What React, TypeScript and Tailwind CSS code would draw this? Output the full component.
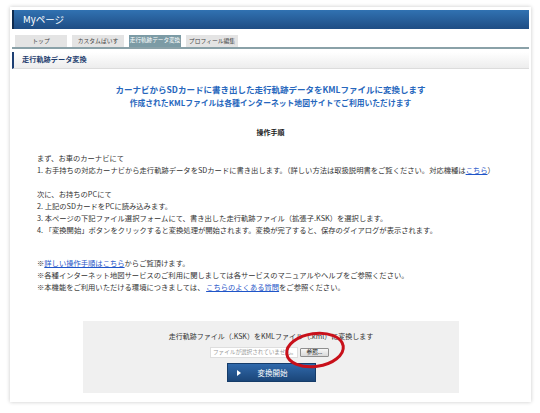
export default function App() {
  const tabs = [
    { label: "トップ", active: false },
    { label: "カスタムぱいす", active: false },
    { label: "走行軌跡データ変換", active: true },
    { label: "プロフィール編集", active: false },
  ];

  return (
    <div className="w-[540px] h-[413px] bg-white pt-[7px] pl-[10px] font-['Noto_Sans_CJK_JP','Noto_Sans',sans-serif] text-[#333]">
      <div className="w-[521px] h-[395px] bg-white shadow-[0_0_4px_rgba(0,0,0,0.22)] px-[2px] pt-[3px]">
        {/* page header */}
        <div className="h-[19px] flex items-center pl-[9px] border-l-[2px] border-[#0e2b4f] bg-linear-to-b from-[#3172b2] to-[#1f4d84] text-white text-[9.5px] leading-none">
          Myページ
        </div>

        {/* tabs */}
        <div className="mt-[6px] pl-[3px] flex gap-[5px] h-[12px]">
          {tabs.map((t) => (
            <div
              key={t.label}
              className={
                t.active
                  ? "w-[52px] h-[12px] flex items-center justify-center bg-[#7c9ba5] text-white text-[5.6px] leading-none whitespace-nowrap"
                  : "w-[52px] h-[12px] flex items-center justify-center bg-[#e4e4e4] text-[#444] text-[5.8px] leading-none whitespace-nowrap"
              }
            >
              {t.label}
            </div>
          ))}
        </div>
        <div className="h-[2px] bg-[#8aa1a8]" />

        {/* section header */}
        <div className="mt-[3px] h-[17px] flex items-center pl-[8px] border-l-[2px] border-[#1d3f73] border-b border-b-[#dcdcdc] bg-linear-to-b from-white to-[#ededed] text-[#1d3c6e] text-[7.2px] font-bold leading-none">
          走行軌跡データ変換
        </div>

        {/* body */}
        <div className="pt-[14px]">
          <div className="text-center text-[#2767bd] font-bold">
            <p className="text-[8.5px] leading-[13px]">カーナビからSDカードに書き出した走行軌跡データをKMLファイルに変換します</p>
            <p className="text-[7.8px] leading-[13px]">作成されたKMLファイルは各種インターネット地図サイトでご利用いただけます</p>
          </div>

          <p className="mt-[17px] text-center text-[7px] font-bold leading-[12px] text-[#222]">操作手順</p>

          <div className="mt-[14px] pl-[25px] text-[7.3px] leading-[12px]">
            <p>まず、お車のカーナビにて</p>
            <p>
              1. お手持ちの対応カーナビから走行軌跡データをSDカードに書き出します。（詳しい方法は取扱説明書をご覧ください。対応機種は
              <a className="text-[#1f55c8] underline">こちら</a>）
            </p>
            <p className="mt-[12px]">次に、お持ちのPCにて</p>
            <p>2. 上記のSDカードをPCに読み込みます。</p>
            <p>3. 本ページの下記ファイル選択フォームにて、書き出した走行軌跡ファイル（拡張子.KSK）を選択します。</p>
            <p>4. 「変換開始」ボタンをクリックすると変換処理が開始されます。変換が完了すると、保存のダイアログが表示されます。</p>

            <div className="mt-[21px]">
              <p>
                ※<a className="text-[#1f55c8] underline">詳しい操作手順はこちら</a>からご覧頂けます。
              </p>
              <p>※各種インターネット地図サービスのご利用に関しましては各サービスのマニュアルやヘルプをご参照ください。</p>
              <p>
                ※本機能をご利用いただける環境につきましては、 <a className="text-[#1f55c8] underline">こちらのよくある質問</a>をご参照ください。
              </p>
            </div>
          </div>

          {/* converter form */}
          <div className="relative mt-[28px] ml-[71px] w-[376px] h-[72px] bg-[#f0f0f0] pt-[10px] flex flex-col items-center">
            <p className="text-[7px] leading-[10px] text-[#333]">走行軌跡ファイル（.KSK）をKMLファイル（.kml）に変換します</p>
            <div className="mt-[6px] flex items-center gap-[2px] h-[11px] -ml-[3px]">
              <div className="w-[88px] h-[11px] bg-white border border-[#dedede] flex items-center pl-[2px] overflow-hidden">
                <span className="text-[5.6px] leading-none text-[#9a9a9a] whitespace-nowrap">ファイルが選択されていません。</span>
              </div>
              <div className="w-[29px] h-[9px] flex items-center justify-center border border-[#8f8f8f] rounded-[1px] bg-linear-to-b from-[#f7f7f7] to-[#d9d9d9] text-[5.6px] leading-none text-[#111]">
                参照...
              </div>
            </div>
            <button className="mt-[5px] w-[89px] h-[19px] flex items-center border border-[#163c69] bg-linear-to-b from-[#3069ab] to-[#1b4679] text-white text-[7.5px] leading-none">
              <span className="ml-[9px] w-0 h-0 border-y-[3px] border-y-transparent border-l-[4px] border-l-white" />
              <span className="ml-[17px]">変換開始</span>
            </button>

            {/* red highlight ellipse */}
            <svg className="absolute left-[198px] top-[6px] pointer-events-none" width="70" height="50" viewBox="0 0 70 50">
              <ellipse cx="34" cy="23" rx="28.5" ry="16.5" fill="none" stroke="#c8101a" strokeWidth="3" transform="rotate(-8 34 23)" />
            </svg>
          </div>
        </div>
      </div>
    </div>
  );
}
